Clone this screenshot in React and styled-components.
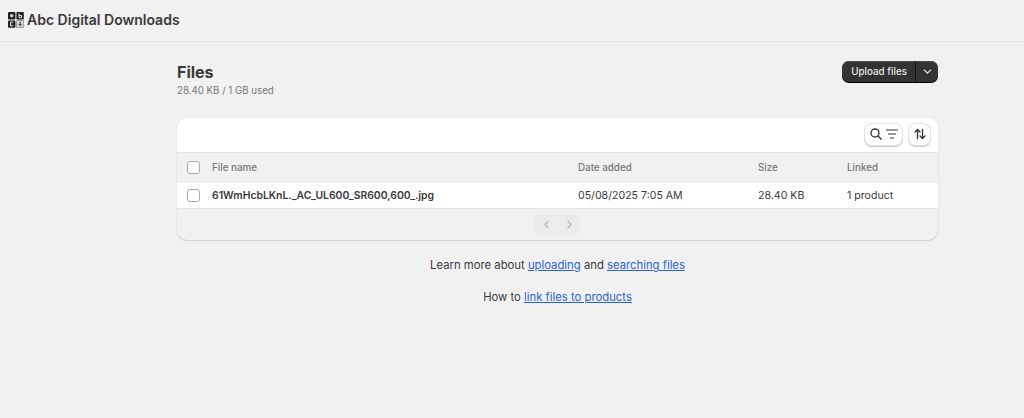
import styled, { createGlobalStyle } from "styled-components";
import { ChevronDown, ChevronLeft, ChevronRight } from "lucide-react";

const GlobalStyle = createGlobalStyle`
  html, body {
    margin: 0;
    background: #f1f1f1;
    font-family: Inter, "Liberation Sans", sans-serif;
    color: #303030;
  }
`;

const Page = styled.div`
  height: 418px;
  overflow: hidden;
`;

const TopBar = styled.header`
  display: flex;
  align-items: center;
  gap: 3px;
  height: 39px;
  padding: 0 0 2px 8px;
  border-bottom: 1px solid #e6e6e6;
`;

const ShopName = styled.h1`
  margin: 0;
  font-size: 14px;
  font-weight: 600;
  color: #3a3a3a;
`;

const Main = styled.main`
  width: 761px;
  margin-left: 177px;
  padding-top: 18px;
`;

const TitleRow = styled.div`
  display: flex;
  justify-content: space-between;
  align-items: flex-start;
  height: 58px;
`;

const Title = styled.h2`
  margin: 0;
  font-size: 16px;
  line-height: 24px;
  font-weight: 700;
  color: #3a3a3a;
`;

const Usage = styled.p`
  margin: 0;
  font-size: 9.7px;
  line-height: 14px;
  color: #767676;
`;

const SplitButton = styled.div`
  display: flex;
  height: 21px;
  margin-top: 1px;
  border-radius: 7px;
  background: #333;
  box-shadow: 0 1px 0 #000, inset 0 1px 0 #4a4a4a;
  color: #e8e8e8;
  font-size: 9.8px;
  font-weight: 500;
`;

const UploadLabel = styled.span`
  display: flex;
  align-items: center;
  padding: 0 8px 0 9px;
  border-right: 1px solid #181818;
`;

const CaretPart = styled.span`
  display: flex;
  align-items: center;
  justify-content: center;
  width: 22px;
`;

const Card = styled.section`
  background: #f1f1f1;
  border-radius: 10px;
  box-shadow: 0 1px 1px #cfcfcf, 0 0 0 1px #ebebeb;
  overflow: hidden;
`;

const Toolbar = styled.div`
  display: flex;
  justify-content: flex-end;
  align-items: center;
  gap: 7px;
  box-sizing: border-box;
  height: 35px;
  padding: 0 8px 2px 0;
  background: #fff;
  border-bottom: 1px solid #e6e6e6;
`;

const ToolButton = styled.span`
  display: flex;
  align-items: center;
  justify-content: center;
  gap: 2px;
  height: 21px;
  width: ${(props) => props.$width}px;
  box-sizing: border-box;
  background: #fff;
  border-radius: 7px;
  box-shadow: 0 0 0 1px #e3e3e3, 0 1px 0 1px #c9c9c9;
`;

const Row = styled.div`
  display: grid;
  grid-template-columns: 35px 366px 180px 89px 1fr;
  align-items: center;
  box-sizing: border-box;
  height: ${(props) => (props.$head ? 30 : 26)}px;
  padding-bottom: 1px;
  background: ${(props) => (props.$head ? "#f1f1f1" : "#fff")};
  font-size: ${(props) => (props.$head ? 9.8 : 10.6)}px;
  color: ${(props) => (props.$head ? "#767676" : "#3a3a3a")};
  font-weight: ${(props) => (props.$head ? 500 : 400)};
  border-bottom: ${(props) => (props.$head ? "none" : "1px solid #e6e6e6")};
`;

const CheckCell = styled.span`
  display: flex;
  padding-left: 10px;
`;

const Check = styled.span`
  width: 13px;
  height: 13px;
  box-sizing: border-box;
  background: #fff;
  border: 1px solid #a8a8a8;
  border-radius: 3px;
`;

const FileName = styled.span`
  font-size: 10.4px;
  font-weight: 600;
`;

const Pager = styled.div`
  display: flex;
  justify-content: center;
  align-items: center;
  height: 31px;
`;

const PagerButton = styled.span`
  display: flex;
  align-items: center;
  justify-content: center;
  width: 22px;
  height: 21px;
  background: #ebebeb;
  color: #b5b5b5;
  border-radius: ${(props) => (props.$left ? "5px 0 0 5px" : "0 5px 5px 0")};
  border-left: ${(props) => (props.$left ? "none" : "1px solid #f1f1f1")};
`;

const Help = styled.p`
  margin: ${(props) => props.$top}px 0 0;
  text-align: center;
  font-size: 11.3px;
  line-height: 16px;
  color: #3a3a3a;
`;

const Link = styled.a`
  color: #2c62d0;
  text-decoration: underline;
`;

const LogoIcon = () => (
  <svg width="16" height="16" viewBox="0 0 16 16">
    <rect x="0" y="0" width="7.4" height="7.4" rx="1" fill="#1f1f1f" />
    <rect x="8.4" y="0" width="7.4" height="7.4" rx="1" fill="#1f1f1f" />
    <rect x="0" y="8.4" width="7.4" height="7.4" rx="1" fill="#1f1f1f" />
    <rect x="8.4" y="8.4" width="7.4" height="7.4" rx="1" fill="#d8d8d8" stroke="#555" strokeWidth="0.6" />
    <circle cx="3.7" cy="3.7" r="1.8" fill="#c8c8c8" />
    <path d="M11 1.6v4h2.6v-2.2H11" fill="none" stroke="#eee" strokeWidth="1" />
    <path d="M5.2 10.2H2.6v3.6h2.6" fill="none" stroke="#eee" strokeWidth="1" />
    <path d="M12.1 9.8v3.4M10.6 12l1.5 1.6 1.5-1.6" fill="none" stroke="#222" strokeWidth="1" />
  </svg>
);

const SearchFilterIcon = () => (
  <>
    <svg width="14" height="14" viewBox="0 0 14 14" fill="none" stroke="#303030" strokeWidth="1.3" strokeLinecap="round">
      <circle cx="6" cy="6" r="4" />
      <path d="M9 9l3.2 3.2" />
    </svg>
    <svg width="14" height="14" viewBox="0 0 14 14" fill="none" stroke="#303030" strokeWidth="1.2" strokeLinecap="round">
      <path d="M1.5 3h11M3.5 7h7M5.5 11h3" />
    </svg>
  </>
);

const SortIcon = () => (
  <svg width="14" height="14" viewBox="0 0 14 14" fill="none" stroke="#303030" strokeWidth="1.3" strokeLinecap="round" strokeLinejoin="round">
    <path d="M4.5 11.5v-9M2 5l2.5-2.5L7 5" />
    <path d="M9.5 2.5v9M7 9l2.5 2.5L12 9" />
  </svg>
);

const App = () => (
  <Page>
    <GlobalStyle />
    <TopBar>
      <LogoIcon />
      <ShopName>Abc Digital Downloads</ShopName>
    </TopBar>
    <Main>
      <TitleRow>
        <div>
          <Title>Files</Title>
          <Usage>28.40 KB / 1 GB used</Usage>
        </div>
        <SplitButton>
          <UploadLabel>Upload files</UploadLabel>
          <CaretPart>
            <ChevronDown size={13} strokeWidth={2.2} />
          </CaretPart>
        </SplitButton>
      </TitleRow>
      <Card>
        <Toolbar>
          <ToolButton $width={37}>
            <SearchFilterIcon />
          </ToolButton>
          <ToolButton $width={21}>
            <SortIcon />
          </ToolButton>
        </Toolbar>
        <Row $head>
          <CheckCell>
            <Check />
          </CheckCell>
          <span>File name</span>
          <span>Date added</span>
          <span>Size</span>
          <span>Linked</span>
        </Row>
        <Row>
          <CheckCell>
            <Check />
          </CheckCell>
          <FileName>61WmHcbLKnL._AC_UL600_SR600,600_.jpg</FileName>
          <span>05/08/2025 7:05 AM</span>
          <span>28.40 KB</span>
          <span>1 product</span>
        </Row>
        <Pager>
          <PagerButton $left>
            <ChevronLeft size={13} />
          </PagerButton>
          <PagerButton>
            <ChevronRight size={13} />
          </PagerButton>
        </Pager>
      </Card>
      <Help $top={17}>
        Learn more about <Link href="#">uploading</Link> and <Link href="#">searching files</Link>
      </Help>
      <Help $top={16}>
        How to <Link href="#">link files to products</Link>
      </Help>
    </Main>
  </Page>
);

export default App;
